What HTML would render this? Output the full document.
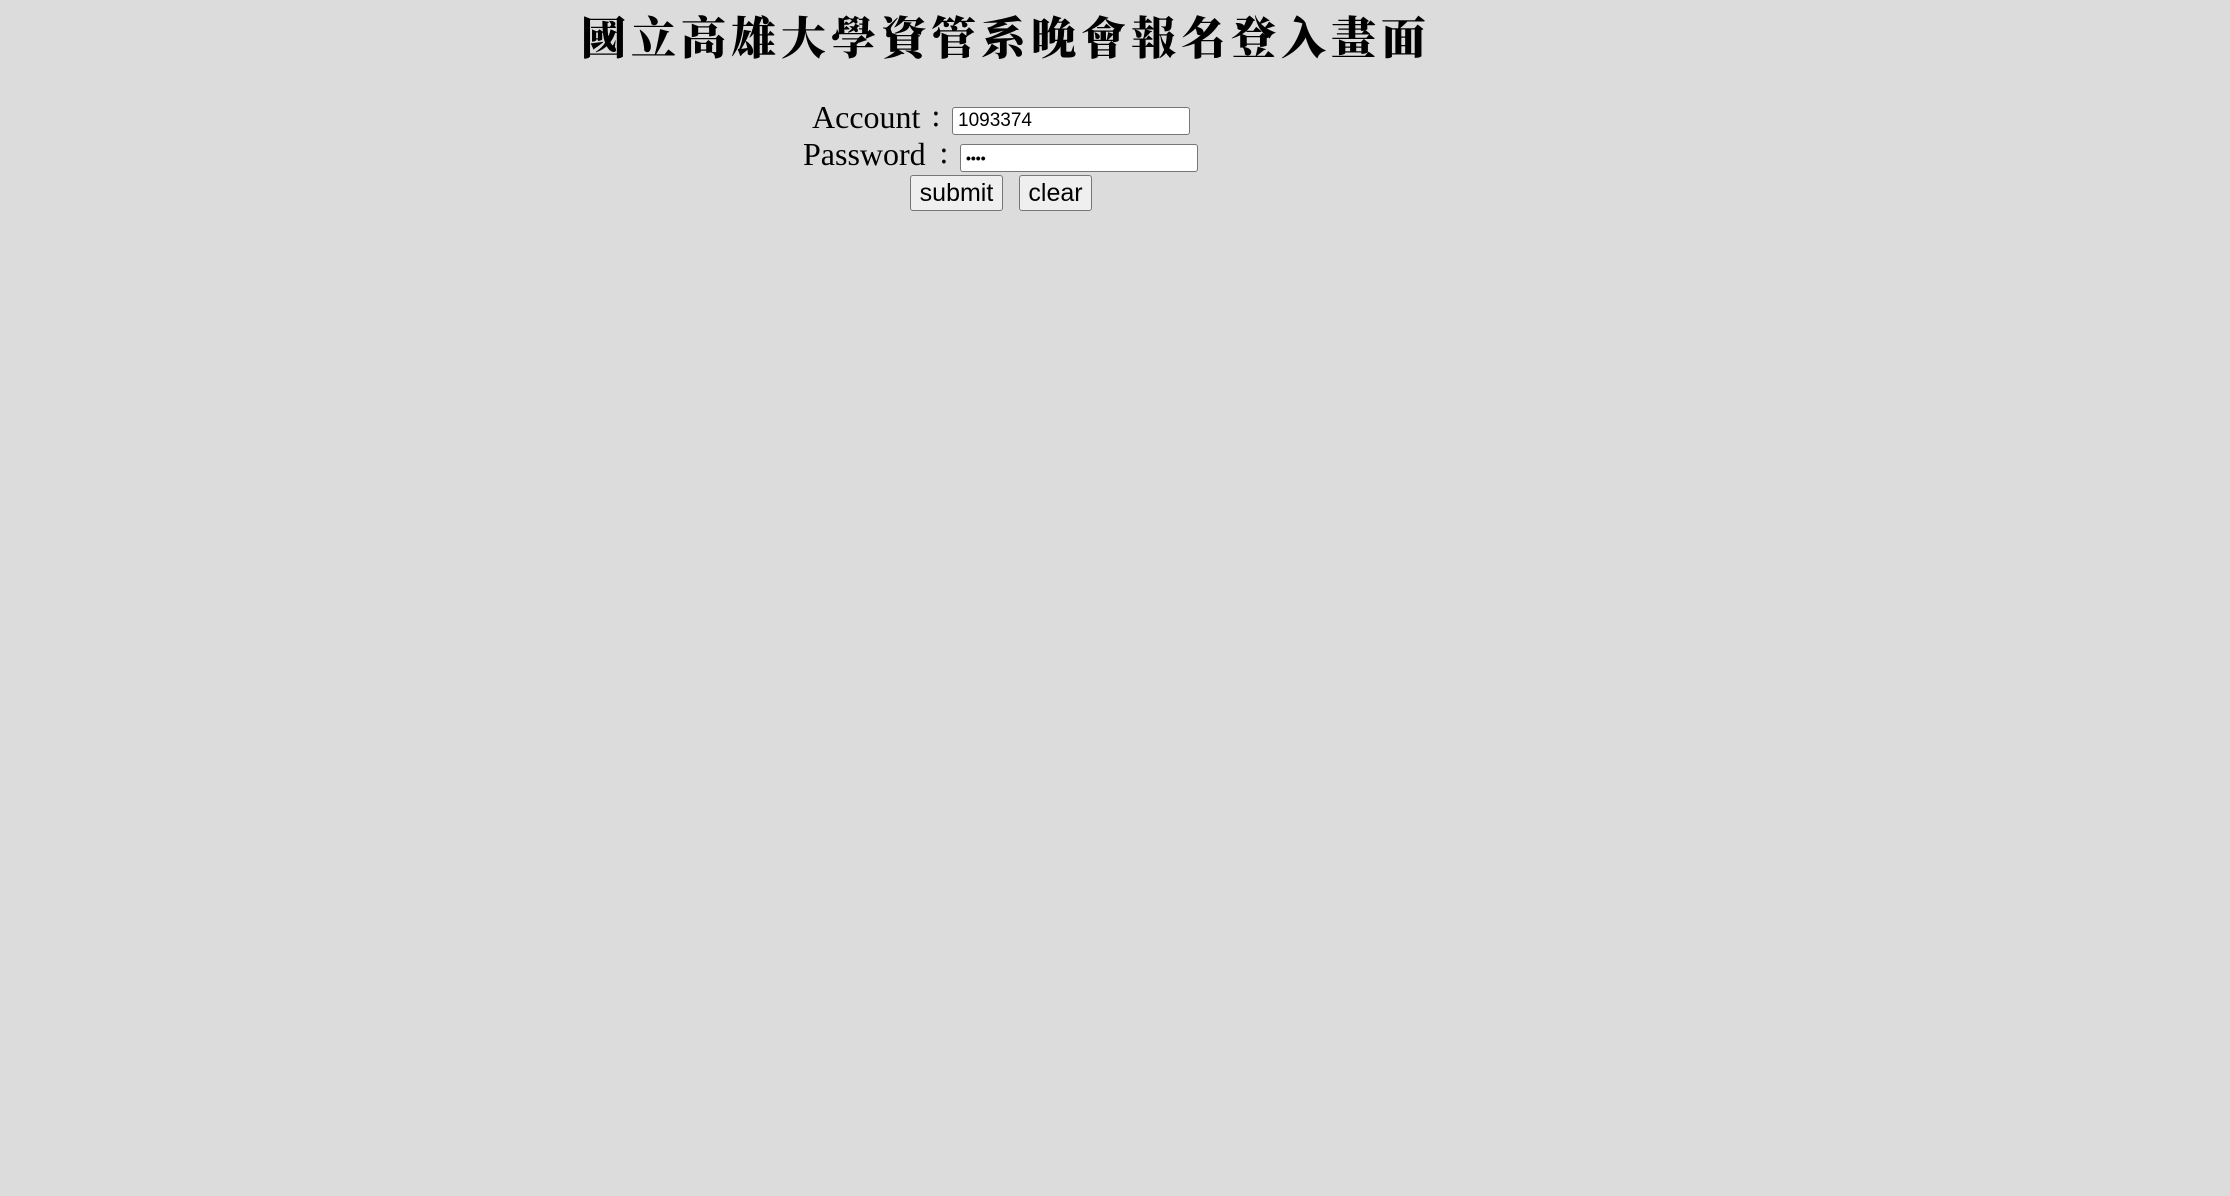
<!DOCTYPE html>
<html><head><meta charset="utf-8"><style>
html,body{margin:0;padding:0;background:#dcdcdc;width:2230px;height:1196px;overflow:hidden;position:relative}
.t{position:absolute;left:581px;top:2px;font-family:"Noto Serif CJK SC","Noto Sans CJK TC",serif;font-weight:900;font-size:45px;letter-spacing:5px;white-space:nowrap;color:#000;line-height:66px}
.l{position:absolute;font-family:"Liberation Serif",serif;font-size:32px;line-height:36px;color:#000;white-space:nowrap}
.c{position:absolute;font-family:"Noto Sans CJK TC",sans-serif;font-size:28px;line-height:30px}
.i{position:absolute;box-sizing:border-box;background:#fff;border:1px solid #767676;border-radius:3px;height:28px;width:238px;font-family:"Liberation Sans",sans-serif;font-size:19px;line-height:26px;padding-left:5px;color:#000}
.b{position:absolute;box-sizing:border-box;background:#efefef;border:1px solid #767676;border-radius:3px;height:36px;top:175px;font-family:"Liberation Sans",sans-serif;font-size:25px;line-height:34px;text-align:center;color:#000}
</style></head><body>
<div class="t">國立高雄大學資管系晚會報名登入畫面</div>
<div class="l" style="left:812px;top:99px">Account</div>
<div class="c" style="left:932px;top:100px">:</div>
<div class="i" style="left:952px;top:107px">1093374</div>
<div class="l" style="left:803px;top:136px">Password</div>
<div class="c" style="left:940px;top:137px">:</div>
<div class="i" style="left:960px;top:144px;font-size:14px;letter-spacing:0px;font-weight:bold">••••</div>
<div class="b" style="left:910px;width:93px">submit</div>
<div class="b" style="left:1019px;width:73px">clear</div>
</body></html>
